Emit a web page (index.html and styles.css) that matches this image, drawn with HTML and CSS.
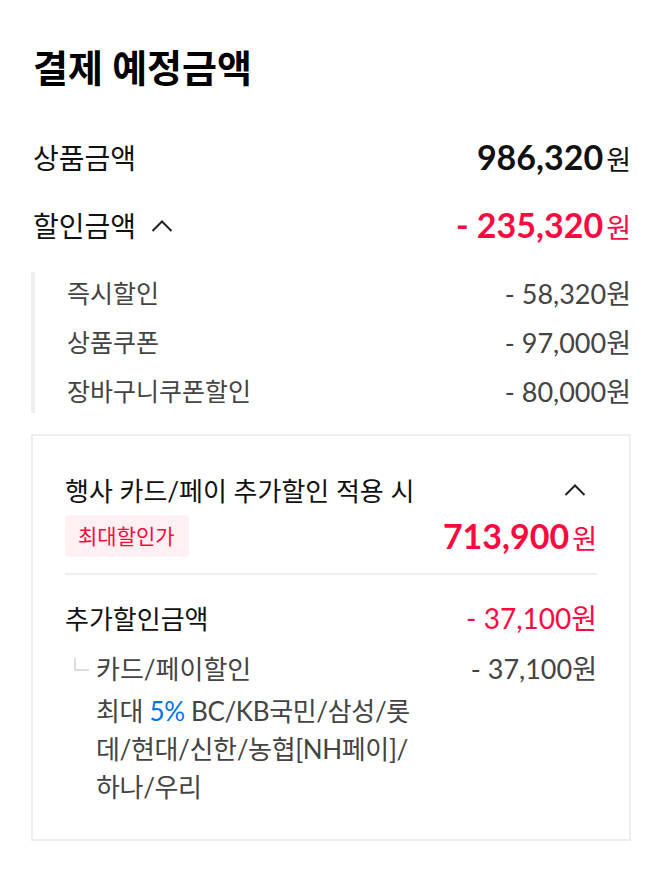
FILE: index.html
```html
<!DOCTYPE html>
<html lang="ko">
<head>
<meta charset="utf-8">
<link rel="stylesheet" href="styles.css">
</head>
<body>
<div class="wrap">
  <h2 class="title">결제 예정금액</h2>
  <div class="row main first">
    <span class="label">상품금액</span>
    <span class="price"><b class="num">986,320</b><span class="won">원</span></span>
  </div>
  <div class="row main">
    <span class="label">할인금액 <svg class="chev" width="22" height="16" viewBox="0 0 22 16"><path d="M1.5 14 L11 4.5 L20.5 14" fill="none" stroke="#222" stroke-width="2"/></svg></span>
    <span class="price red"><b class="num">- 235,320</b><span class="won">원</span></span>
  </div>
  <div class="sub">
    <div class="subrow"><span>즉시할인</span><span class="subval">- 58,320원</span></div>
    <div class="subrow"><span>상품쿠폰</span><span class="subval">- 97,000원</span></div>
    <div class="subrow"><span>장바구니쿠폰할인</span><span class="subval">- 80,000원</span></div>
  </div>
  <div class="box">
    <div class="boxhead">
      <span>행사 카드/페이 추가할인 적용 시</span>
      <svg class="chev" width="22" height="16" viewBox="0 0 22 16"><path d="M1.5 14 L11 4.5 L20.5 14" fill="none" stroke="#222" stroke-width="2"/></svg>
    </div>
    <div class="boxprice">
      <span class="badge">최대할인가</span>
      <span class="price red"><b class="num">713,900</b><span class="won">원</span></span>
    </div>
    <div class="extra">
      <div class="extrarow">
        <span class="elabel">추가할인금액</span>
        <span class="eval">- 37,100원</span>
      </div>
      <div class="cardrow">
        <span class="corner"></span>
        <div class="cardtext">
          <div class="cardname">카드/페이할인</div>
          <div class="carddesc">최대 <span class="blue">5%</span> BC/KB국민/삼성/롯데/현대/신한/농협[NH페이]/하나/우리</div>
        </div>
        <span class="cardval">- 37,100원</span>
      </div>
    </div>
  </div>
</div>
</body>
</html>
```
FILE: styles.css
```css
* { box-sizing: border-box; }
body {
  margin: 0;
  background: #fff;
  font-family: Lato, "Noto Sans CJK KR", sans-serif;
  color: #111;
}
.wrap {
  padding: 40px 25px 40px 31px;
}
.title {
  margin: 0 0 0 2px;
  font-size: 38px;
  font-weight: 700;
  line-height: 54px;
  color: #000;
}
.row {
  display: flex;
  justify-content: space-between;
  align-items: center;
}
.main {
  height: 68px;
  padding-left: 2px;
}
.main.first { margin-top: 29px; }
.label {
  font-size: 28px;
  color: #111;
  display: flex;
  align-items: center;
  gap: 15px;
}
.price {
  display: flex;
  align-items: baseline;
}
.num {
  font-size: 34px;
  font-weight: 700;
}
.won {
  font-size: 27px;
  margin-left: 3px;
}
.red { color: #fb0a3f; }
.chev { display: block; }
.sub {
  margin-top: 13px;
  border-left: 4px solid #eee;
  padding: 0 0 3px 32px;
  display: flex;
  flex-direction: column;
  gap: 9px;
}
.subrow {
  display: flex;
  justify-content: space-between;
  align-items: center;
  height: 40px;
  font-size: 25px;
  color: #444;
}
.subval {
  font-size: 27px;
}
.box {
  margin-top: 21px;
  border: 2px solid #eee;
  width: 600px;
  padding: 37px 32px 33px 32px;
}
.boxhead {
  display: flex;
  justify-content: space-between;
  align-items: center;
  font-size: 26px;
  color: #111;
  height: 32px;
}
.boxhead .chev { margin-right: 11px; }
.boxprice {
  display: flex;
  justify-content: space-between;
  align-items: center;
  margin-top: 10px;
  padding-bottom: 16px;
  border-bottom: 2px solid #eee;
}
.badge {
  background: #fff0f3;
  color: #fb0a3f;
  font-size: 21px;
  border-radius: 4px;
  padding: 8px 14px 8px 13px;
  line-height: 26px;
}
.extra { padding-top: 22px; }
.extrarow {
  display: flex;
  justify-content: space-between;
  align-items: center;
  height: 40px;
}
.elabel { font-size: 26px; color: #111; }
.eval { font-size: 28px; color: #fb0a3f; }
.cardrow {
  display: flex;
  align-items: flex-start;
  margin-top: 13px;
}
.corner {
  width: 15px;
  height: 13px;
  border-left: 2px solid #ddd;
  border-bottom: 2px solid #ddd;
  margin: 8px 7px 0 9px;
  flex: none;
}
.cardtext {
  width: 318px;
  font-size: 26px;
  color: #444;
  line-height: 38px;
}
.cardname { margin-bottom: 4px; }
.carddesc { letter-spacing: -0.35px; }
.blue { color: #0073e9; }
.cardval {
  margin-left: auto;
  font-size: 27px;
  color: #444;
  line-height: 38px;
}
```
